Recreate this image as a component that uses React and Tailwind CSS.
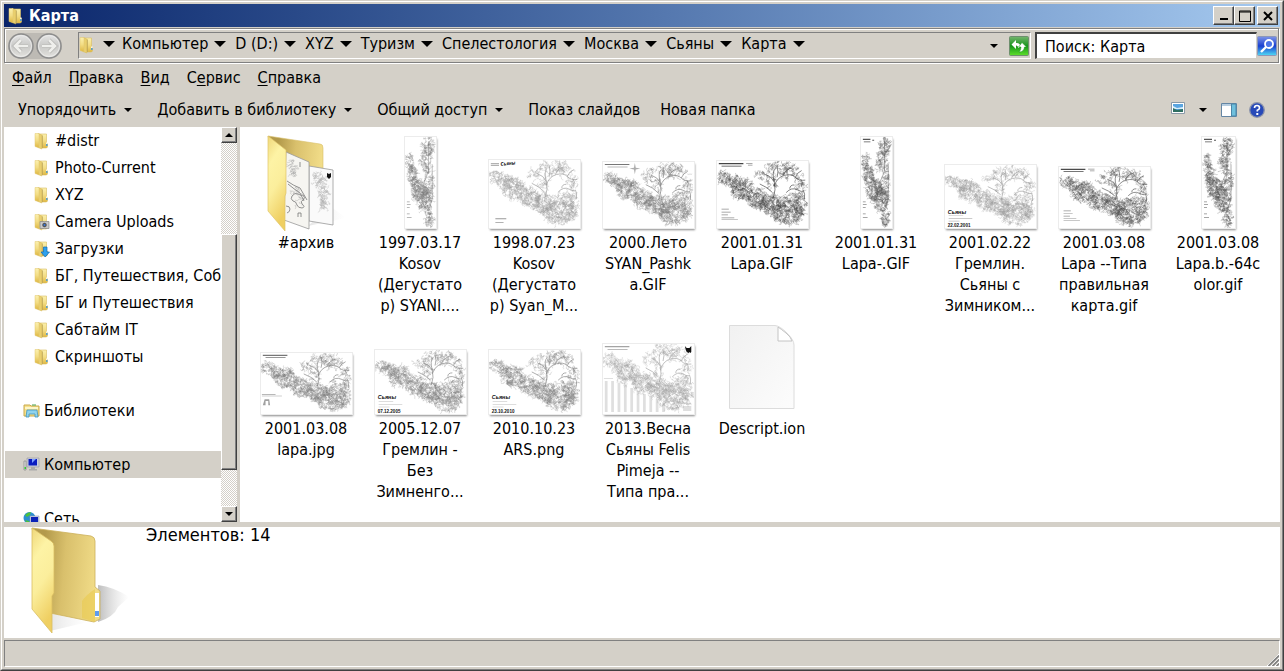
import { useState } from 'react';

const MENU = [
  ['', 'Ф', 'айл'],
  ['', 'П', 'равка'],
  ['', 'В', 'ид'],
  ['С', 'е', 'рвис'],
  ['', 'С', 'правка'],
];

const CRUMBS = ['Компьютер', 'D (D:)', 'XYZ', 'Туризм', 'Спелестология', 'Москва', 'Сьяны', 'Карта'];

const COMMANDS = [
  { label: 'Упорядочить', menu: true },
  { label: 'Добавить в библиотеку', menu: true },
  { label: 'Общий доступ', menu: true },
  { label: 'Показ слайдов' },
  { label: 'Новая папка' },
];

const TREE = [
  { label: '#distr', icon: 'folder' },
  { label: 'Photo-Current', icon: 'folder' },
  { label: 'XYZ', icon: 'folder' },
  { label: 'Camera Uploads', icon: 'camera' },
  { label: 'Загрузки', icon: 'download' },
  { label: 'БГ, Путешествия, Собаки', icon: 'folder' },
  { label: 'БГ и Путешествия', icon: 'folder' },
  { label: 'Сабтайм IT', icon: 'folder' },
  { label: 'Скриншоты', icon: 'folder' },
  null,
  { label: 'Библиотеки', icon: 'library', root: true },
  null,
  { label: 'Компьютер', icon: 'computer', root: true },
  null,
  { label: 'Сеть', icon: 'network', root: true },
];

const FILES = [
  { lines: ['#архив'], kind: 'folder' },
  { lines: ['1997.03.17', 'Kosov', '(Дегустато', 'р) SYANI....'], kind: 'tall', w: 31, h: 91, ink: '#777', seed: 3 },
  { lines: ['1998.07.23', 'Kosov', '(Дегустато', 'р) Syan_M...'], kind: 'wide', w: 91, h: 68, ink: '#999', seed: 5, corner: 'Сьяны' },
  { lines: ['2000.Лето', 'SYAN_Pashk', 'a.GIF'], kind: 'wide', w: 91, h: 66, ink: '#777', seed: 8, head: true, star: true },
  { lines: ['2001.01.31', 'Lapa.GIF'], kind: 'wide', w: 91, h: 67, ink: '#444', seed: 11, head: true, notes: true },
  { lines: ['2001.01.31', 'Lapa-.GIF'], kind: 'tall', w: 31, h: 91, ink: '#555', seed: 14, head: true },
  { lines: ['2001.02.22', 'Гремлин.', 'Сьяны с', 'Зимником...'], kind: 'wide', w: 91, h: 63, ink: '#999', seed: 17, date: '22.02.2001' },
  { lines: ['2001.03.08', 'Lapa --Типа', 'правильная', 'карта.gif'], kind: 'wide', w: 91, h: 61, ink: '#4a4a4a', seed: 20, head: true, notes: true },
  { lines: ['2001.03.08', 'Lapa.b.-64c', 'olor.gif'], kind: 'tall', w: 33, h: 91, ink: '#555', seed: 23, head: true },
  { lines: ['2001.03.08', 'lapa.jpg'], kind: 'wide', w: 91, h: 61, ink: '#777', seed: 26, head: true, legend: true },
  { lines: ['2005.12.07', 'Гремлин -', 'Без', 'Зимненго...'], kind: 'wide', w: 91, h: 64, ink: '#808080', seed: 29, date: '07.12.2005' },
  { lines: ['2010.10.23', 'ARS.png'], kind: 'wide', w: 91, h: 64, ink: '#808080', seed: 32, date: '23.10.2010' },
  { lines: ['2013.Весна', 'Сьяны Felis', 'Pimeja --', 'Типа пра...'], kind: 'wide', w: 91, h: 70, ink: '#a4a4a4', seed: 35, head: true, columns: true },
  { lines: ['Descript.ion'], kind: 'page' },
];

// cave galleries: [cx, cy, rx, ry, passages]
const WIDE = [
  [8, 17, 8, 6, 50],
  [17, 22, 8, 7, 60],
  [27, 29, 12, 11, 190],
  [44, 39, 11, 10, 150],
  [60, 45, 13, 10, 190],
  [78, 53, 17, 13, 300],
  [92, 48, 6, 12, 60],
  [70, 7, 18, 6, 70],
  [80, 12, 14, 6, 36],
  [92, 25, 6, 9, 30],
  [50, 15, 8, 5, 26],
  [60, 25, 6, 8, 26],
  [84, 37, 12, 4, 40],
];
const TALL = [
  [5, 27, 4, 9, 50],
  [8, 42, 5, 10, 110],
  [14, 58, 8, 12, 190],
  [21, 69, 8, 14, 210],
  [26, 89, 4, 10, 70],
  [25, 11, 6, 10, 90],
  [22, 28, 6, 12, 80],
  [26, 50, 5, 14, 70],
];

function drawCave(seed, areas, step) {
  let s = seed * 7919;
  const rnd = () => {
    s = (s * 16807) % 2147483647;
    return s / 2147483647;
  };
  let d = '';
  areas.forEach(([cx, cy, rx, ry, count]) => {
    for (let i = 0; i < count; i++) {
      const a = rnd() * Math.PI * 2;
      const r = Math.sqrt(rnd());
      let x = cx + Math.cos(a) * rx * r;
      let y = cy + Math.sin(a) * ry * r;
      let dir = rnd() * Math.PI * 2;
      d += `M${x.toFixed(1)} ${y.toFixed(1)}`;
      for (let k = 0; k < 5; k++) {
        dir += (rnd() - 0.5) * 4;
        x += Math.cos(dir) * step;
        y += Math.sin(dir) * step;
        d += `L${x.toFixed(1)} ${y.toFixed(1)}`;
      }
    }
  });
  return d;
}

function MapThumb({ file }) {
  const tall = file.kind === 'tall';
  const d = drawCave(file.seed, tall ? TALL : WIDE, tall ? 0.9 : 1.1);
  return (
    <svg
      width={file.w}
      height={file.h}
      viewBox={tall ? '0 0 33 100' : '0 0 100 70'}
      preserveAspectRatio="none"
      className="bg-white outline outline-[#ececec] shadow-[1px_2px_2px_#888]"
      aria-hidden="true"
    >
      <g fill="none" stroke={file.ink} strokeLinejoin="round">
        <path d={d} strokeWidth="0.28" />
        {!tall && (
          <path
            strokeWidth="0.7"
            d="M62 38Q65 30 63 22Q60 16 53 14M63 26Q66 17 74 15Q82 13 86 17T97 20M66 17Q68 12 66 5M73 15Q75 9 82 7M63 22Q60 12 64 8M86 17Q88 12 93 10M92 19Q95 22 93 27M76 33Q82 27 88 30T95 31Q97 34 96 40M61 33Q55 27 47 24M80 29Q80 25 85 25"
          />
        )}
        {tall && <path strokeWidth="0.5" d="M25 5V38L20 50M25 20L30 12M22 30L18 22M29 30V68L26 78" />}
      </g>
      <g fill={file.ink} stroke="none">
        {file.head && !tall && <path d="M2 2h27v1.3H2zM5 5h22v.7H5z" />}
        {file.head && tall && <path d="M2 2h8v1.3H2zM3 5h7v.7H3zM12 3h2v1h-2z" />}
        {file.notes && <path opacity=".6" d="M5 50h8v.7H5zM5 53h10v.7H5zM5 56h7v.7H5zM5 59h14v.7H5zM5 61h18v.7H5zM32 2h7v.8h-7zM34 4h5v.8h-5z" />}
        {file.star && <path opacity=".6" d="M35 1l1 5 5 1-5 1-1 5-1-5-5-1 5-1z" />}
        {file.legend && <path opacity=".7" d="M1 47h15v1H1zM1 49h22v.6H1zM2 60l2-7h5l1 7h-2V55H5v5z" />}
        {file.columns && (
          <path
            opacity=".35"
            d="M1 34h10v1H1zM2 37h3v31H2zM9 37h3v31H9zM16 39h3v29h-3zM23 41h3v27h-3zM30 44h3v24h-3zM37 47h3v21h-3zM44 50h3v18h-3zM51 52h3v16h-3zM58 55h3v13h-3zM65 59h3v9h-3zM86 59h11v1H86zM88 62h9v5h-9z"
          />
        )}
        {file.columns && <path fill="#111" d="M90 2l2 2h3l2-2v6l-1 1-1-1-1 1-2-1-1-2z" />}
        {tall && <path opacity=".7" d="M2 71h3v.8H2zM2 74h4v.8H2zM2 77h3v.8H2zM2 84h3v1H2zM2 88h5v.8H2z" />}
      </g>
      {file.corner && (
        <g fill="#222">
          <path fill="#999" d="M2 3h9v.8H2zM2 5h9v.8H2zM7 60h12v1H7zM7 64h9v.8H7z" />
          <text x="13" y="6" fontSize="5" fontStyle="italic" fontWeight="bold" transform="rotate(-5 13 6)">{file.corner}</text>
        </g>
      )}
      {file.date && (
        <g fill="#111" fontWeight="bold" fontFamily="Liberation Sans, sans-serif">
          <text x="3" y="54" fontSize="6" fontStyle="italic">Сьяны</text>
          <path fill="#bbb" d="M4 56h16v.7H4zM4 59h26v.7H4zM4 62h12v.7H4z" />
          <text x="3" y="69" fontSize="5">{file.date}</text>
        </g>
      )}
    </svg>
  );
}

function SharedGradients() {
  return (
    <svg width="0" height="0" className="absolute" aria-hidden="true">
      <defs>
        <linearGradient id="front" x1="0" y1="0" x2="0.3" y2="1">
          <stop offset="0" stopColor="#efd77a" />
          <stop offset="0.3" stopColor="#fdf3a5" />
          <stop offset="0.6" stopColor="#fbee9c" />
          <stop offset="1" stopColor="#efcf62" />
        </linearGradient>
        <linearGradient id="back" x1="0.2" y1="0" x2="1" y2="0.1">
          <stop offset="0" stopColor="#b39a4b" />
          <stop offset="0.4" stopColor="#d9c06c" />
          <stop offset="1" stopColor="#f1dc88" />
        </linearGradient>
        <linearGradient id="small" x1="0" y1="0" x2="0" y2="1">
          <stop offset="0" stopColor="#fbf0ae" />
          <stop offset="0.5" stopColor="#f3dd84" />
          <stop offset="1" stopColor="#dfb843" />
        </linearGradient>
        <linearGradient id="shade" x1="0" y1="0" x2="1" y2="0">
          <stop offset="0" stopColor="#888" stopOpacity="0.55" />
          <stop offset="1" stopColor="#bbb" stopOpacity="0" />
        </linearGradient>
        <linearGradient id="sheet" x1="0" y1="0" x2="1" y2="1">
          <stop offset="0" stopColor="#f1f1f1" />
          <stop offset="1" stopColor="#fcfcfc" />
        </linearGradient>
        <linearGradient id="orb" x1="0" y1="0" x2="0" y2="1">
          <stop offset="0" stopColor="#e6e6e6" />
          <stop offset="0.5" stopColor="#c9c9c7" />
          <stop offset="1" stopColor="#e4e3df" />
        </linearGradient>
        <linearGradient id="green" x1="0" y1="0" x2="0" y2="1">
          <stop offset="0" stopColor="#76b56f" />
          <stop offset="0.5" stopColor="#16941b" />
          <stop offset="1" stopColor="#5fe02a" />
        </linearGradient>
        <linearGradient id="blue" x1="0" y1="0" x2="0" y2="1">
          <stop offset="0" stopColor="#7d94e8" />
          <stop offset="0.5" stopColor="#1a3fd0" />
          <stop offset="1" stopColor="#4fdcf5" />
        </linearGradient>
      </defs>
    </svg>
  );
}

function ArchiveFolder() {
  return (
    <svg width="84" height="98" viewBox="0 0 84 98" className="-mb-1" aria-hidden="true">
      <path d="M44 92L82 84 66 72z" fill="url(#shade)" opacity=".4" />
      <path d="M4 2L56 10Q59 10 59 14V60L20 70z" fill="url(#back)" stroke="#d8bf6a" strokeWidth=".6" />
      <path d="M45 32L69 36V91L45 87z" fill="#fafafa" stroke="#999" strokeWidth=".8" />
      <path d={drawCave(41, [[55, 45, 6, 7, 40], [59, 62, 6, 14, 70]], 1.2)} fill="none" stroke="#aaa" strokeWidth=".35" />
      <path d="M63 39l2 1 2-1v4l-2 2-2-2z" fill="#111" />
      <path d="M22 18L45 28V95L20 86z" fill="#f6f5f1" stroke="#999" strokeWidth=".8" />
      <path
        d="M23 47Q30 52 36 54L43 66M24 50Q30 55 36 59L40 67M28 62q3-4 6-2t5 1q3 3 0 5-3 1-1 4 4 3 0 4-4 0-5-3-1-4-4-4-3-2-1-5M22 72q4 0 4 3t-3 4M34 83v-4h3v4M36 28v5"
        fill="none"
        stroke="#777"
        strokeWidth=".8"
      />
      <path d={drawCave(44, [[29, 34, 4, 8, 24], [33, 62, 7, 9, 14]], 1.3)} fill="none" stroke="#999" strokeWidth=".35" />
      <path d="M4 2L22 16V59L21 62V97L4 77z" fill="url(#front)" stroke="#dfc468" strokeWidth=".7" />
    </svg>
  );
}

function BigFolder() {
  return (
    <svg width="102" height="111" viewBox="0 0 102 111" className="shrink-0" aria-hidden="true">
      <path d="M70 95Q86 90 90 80L101 70Q86 60 70 58z" fill="url(#shade)" />
      <path d="M22 104L60 95 22 86z" fill="url(#shade)" opacity=".4" />
      <path d="M4 1L63 9Q67 10 67 14V60L72 64V92L66 95 22 86z" fill="url(#back)" stroke="#cbb05a" strokeWidth=".8" />
      <path d="M54 74Q58 68 67 62V95L54 91z" fill="#e9c94f" opacity=".6" />
      <path d="M67 66h4v24h-4z" fill="#fff" />
      <path d="M67 84h4v5h-4z" fill="#5e9cf0" />
      <path d="M4 1L23 14Q26 16 26 19V66L24 69V106L4 82z" fill="url(#front)" stroke="#d9be62" strokeWidth=".8" />
    </svg>
  );
}

function PageIcon() {
  return (
    <svg width="70" height="92" viewBox="0 0 70 92" aria-hidden="true">
      <path d="M3 4h47l17 18v65H3z" fill="#bbb" opacity=".35" />
      <path d="M2.500 3.500H48Q53 4 60 11T67 23V86.500H2.500z" fill="url(#sheet)" stroke="#dcdcdc" />
      <path d="M51 5V19H65Q64 15 59 11T51 5z" fill="#fff" stroke="#c4c4c4" />
    </svg>
  );
}

function TreeIcon({ name }) {
  if (name === 'library') {
    return (
      <svg width="17" height="16" viewBox="0 0 17 16" aria-hidden="true">
        <path d="M1 2h6l1 1h8v10H1z" fill="#f6e08a" stroke="#c8a84a" />
        <path d="M2 4h13v2H2z" fill="#fdf6c9" />
        <path d="M4 7h10l1 7h-3v-3H6v3H3z" fill="#8fd3ee" stroke="#3f95bf" strokeWidth=".8" />
        <path d="M9 2h4" stroke="#4aa34a" />
      </svg>
    );
  }
  if (name === 'computer') {
    return (
      <svg width="17" height="16" viewBox="0 0 17 16" aria-hidden="true">
        <path d="M1 4h2v9H1z" fill="#ddd" stroke="#888" strokeWidth=".7" />
        <path d="M1.500 10h1.500v2h-1.500z" fill="#3c3" />
        <path d="M4 1h12v9H4z" fill="#c9cede" stroke="#999" strokeWidth=".6" />
        <path d="M5.500 2H14v6.500H5.500z" fill="#0a1cc0" />
        <path d="M9 2h4l-4 4z" fill="#7fa0ff" />
        <path d="M8 10h4v2h2v1.500H6V12h2z" fill="#aaa" />
      </svg>
    );
  }
  if (name === 'network') {
    return (
      <svg width="17" height="16" viewBox="0 0 17 16" aria-hidden="true">
        <circle cx="6.500" cy="7" r="6" fill="#2c8fd0" />
        <path d="M2 4q3-3 6-3l-1 3-3 2zM2 9l4 1 1 3q-4-1-5-4z" fill="#4cc13c" />
        <path d="M7 5h9v8H7z" fill="#cfd6e8" stroke="#8a93ad" strokeWidth=".6" />
        <path d="M8 6h7v6H8z" fill="#0b22b8" />
        <path d="M9 14h5v1H9z" fill="#999" />
      </svg>
    );
  }
  return (
    <svg width="17" height="18" viewBox="0 0 17 18" aria-hidden="true">
      <path d="M4 2h8.500v8.500l1 1V15l-1 1H8z" fill="url(#small)" stroke="#d9bd62" strokeWidth=".6" />
      <path d="M8.300 3.500V16" stroke="#b7a05a" strokeWidth=".9" />
      <path d="M4 1.500L7.800 3v14L4 15.500z" fill="#e9cf6e" stroke="#d5b654" strokeWidth=".5" />
      <path d="M1 1.500h4V15l-1 .5-3-1z" fill="url(#small)" stroke="#e0c670" strokeWidth=".5" />
      {name === 'folder' && <path d="M12.200 10.500h1.300v1.500h-1.300z" fill="#fff" />}
      {name === 'folder' && <path d="M12.200 12h1.300v2h-1.300z" fill="#3c94e0" />}
      {name === 'camera' && (
        <g>
          <path d="M6 8.500h9v7H6z" fill="#c8c8c8" stroke="#888" strokeWidth=".7" />
          <circle cx="10.500" cy="12" r="2.700" fill="#555" stroke="#eee" strokeWidth=".6" />
          <circle cx="10.500" cy="12" r="1" fill="#3a7be0" />
        </g>
      )}
      {name === 'download' && <path d="M9.500 7h3.500v5h2.500l-4.300 5L7 12h2.500z" fill="#2ea1ee" stroke="#0f6cb5" strokeWidth=".7" />}
    </svg>
  );
}

function Arrow({ small }) {
  return small ? (
    <svg width="8" height="4" viewBox="0 0 8 4" aria-hidden="true"><path d="M0 0h8L4 4z" /></svg>
  ) : (
    <svg width="12" height="6" viewBox="0 0 12 6" aria-hidden="true"><path d="M0 0h12L6 6z" /></svg>
  );
}

const raised = 'bg-[#d4d0c8] border border-t-white border-l-white border-r-[#404040] border-b-[#404040] shadow-[inset_-1px_-1px_#808080]';

function TitleBar() {
  return (
    <header className="flex h-[23px] shrink-0 items-center bg-linear-to-r from-[#0a246a] to-[#a6caf0] pl-1 pr-[2px]">
      <TreeIcon name="folder" />
      <h1 className="ml-1 flex-1 font-bold leading-5 text-white">Карта</h1>
      <button aria-label="Свернуть" className={`flex h-[19px] w-[21px] items-center justify-center ${raised}`}>
        <svg width="12" height="11" viewBox="0 0 12 11"><path d="M2 8h8v2H2z" /></svg>
      </button>
      <button aria-label="Развернуть" className={`flex h-[19px] w-[21px] items-center justify-center ${raised}`}>
        <svg width="12" height="12" viewBox="0 0 12 12"><path d="M.500 1h11v10.500H.500zM.500 2h11" fill="none" stroke="#000" /></svg>
      </button>
      <button aria-label="Закрыть" className={`ml-[2px] flex h-[19px] w-[21px] items-center justify-center ${raised}`}>
        <svg width="10" height="10" viewBox="0 0 10 10"><path d="M1 1l8 8M9 1L1 9" stroke="#000" strokeWidth="2" /></svg>
      </button>
    </header>
  );
}

function NavOrb({ label, back }) {
  const arrow = back ? 'M20 13H8M13 7l-6 6 6 6' : 'M6 13h12M13 7l6 6-6 6';
  return (
    <button aria-label={label}>
      <svg width="26" height="26" viewBox="0 0 26 26">
        <circle cx="13" cy="13" r="12" fill="url(#orb)" stroke="#8d8d8d" strokeWidth="1.500" />
        <circle cx="13" cy="13" r="10.500" fill="none" stroke="#eee" strokeWidth=".8" />
        <path d={arrow} fill="none" stroke="#b4b4b2" strokeWidth="4" />
        <path d={arrow} fill="none" stroke="#efefec" strokeWidth="2.600" />
      </svg>
    </button>
  );
}

function AddressBar() {
  const [query, setQuery] = useState('');
  return (
    <div className="mt-px mr-px flex h-[35px] shrink-0 items-center border border-[#808080] pl-[3px] shadow-[1px_1px_#fff,inset_1px_1px_#fff]">
      <nav className="flex gap-[2px] rounded-full bg-[#bdbab4]">
        <NavOrb label="Назад" back />
        <NavOrb label="Вперед" />
      </nav>
      <div className="ml-4 flex h-[27px] min-w-0 flex-1 items-center border border-t-[#808080] border-l-[#808080] border-r-white border-b-white pr-px">
        <span className="mb-[2px]"><TreeIcon name="folder" /></span>
        <button aria-label="Расположения" className="mx-[7px] pb-1"><Arrow /></button>
        {CRUMBS.map((crumb) => (
          <button key={crumb} className="mr-[9px] flex items-center gap-[6px] whitespace-nowrap pb-1 leading-5">
            {crumb}
            <Arrow />
          </button>
        ))}
        <button aria-label="Предыдущие расположения" className="ml-auto mr-[11px]"><Arrow small /></button>
        <button aria-label="Обновить">
          <svg width="20" height="20" viewBox="0 0 20 20">
            <rect x=".500" y=".500" width="19" height="19" rx="1" fill="url(#green)" stroke="#6e8f6e" />
            <path d="M2.500 8.500L7 4v3q4-.5 4.500 3.500L9.500 12Q9 9.500 7 9.500V13z" fill="#fff" />
            <path d="M17.500 11L13 6.500 9.500 11h2.500q0 3-2 5 5 0 5.500-5z" fill="#fff" stroke="#16941b" strokeWidth=".5" />
          </svg>
        </button>
      </div>
      <input
        aria-label="Поиск"
        className="ml-1 h-[27px] w-[222px] border-t-2 border-l-2 border-r border-b border-t-[#404040] border-l-[#404040] border-r-[#d4d0c8] border-b-[#d4d0c8] bg-white pl-2 leading-5 outline-none placeholder:text-black"
        placeholder="Поиск: Карта"
        value={query}
        onChange={(e) => setQuery(e.target.value)}
      />
      <button aria-label="Найти" className="mr-px">
        <svg width="20" height="20" viewBox="0 0 20 20">
          <rect x=".500" y=".500" width="19" height="19" rx="1" fill="url(#blue)" stroke="#8c97b8" />
          <circle cx="12" cy="8" r="4" fill="#4c74e8" stroke="#fff" strokeWidth="1.800" />
          <path d="M9 11l-5 5" stroke="#fff" strokeWidth="2.400" />
        </svg>
      </button>
    </div>
  );
}

function CommandBar() {
  return (
    <div className="flex h-[35px] shrink-0 items-center pl-[14px] pr-[15px]">
      {COMMANDS.map((c) => (
        <button key={c.label} className={`flex items-center gap-2 whitespace-nowrap ${c.menu ? 'mr-[25px]' : 'mr-5'}`}>
          {c.label}
          {c.menu && <Arrow small />}
        </button>
      ))}
      <button aria-label="Вид" className="ml-auto mb-1">
        <svg width="14" height="12" viewBox="0 0 14 12">
          <path d="M.500.500h13v11H.500z" fill="#fff" stroke="#8a9aa8" />
          <path d="M2 2h10v8H2z" fill="#5aa5e0" />
          <path d="M2 4l4 2 6-1v2H2z" fill="#d9eefa" />
          <path d="M2 6l4 2 6-1v3H2z" fill="#2f6f62" />
        </svg>
      </button>
      <button aria-label="Другие параметры" className="ml-[14px]"><Arrow small /></button>
      <button aria-label="Область просмотра" className="ml-[14px]">
        <svg width="16" height="14" viewBox="0 0 16 14">
          <path d="M.500.500h15v13H.500z" fill="#fff" stroke="#6486a4" />
          <path d="M1 1h14v2H1z" fill="#b6cde0" />
          <path d="M10.500 1h4.500v12h-4.500z" fill="#6fc0dd" stroke="#4a86a8" />
        </svg>
      </button>
      <button aria-label="Справка" className="ml-3">
        <svg width="16" height="16" viewBox="0 0 16 16">
          <circle cx="8" cy="8" r="7.300" fill="#2749b8" stroke="#8c94aa" strokeWidth="1.300" />
          <path d="M5.500 6q0-2.500 2.500-2.500T10.500 6Q10.500 7.500 8.300 8.300V9.500" fill="none" stroke="#fff" strokeWidth="1.600" />
          <path d="M7.300 11h2v2h-2z" fill="#fff" />
        </svg>
      </button>
    </div>
  );
}

function ScrollBar() {
  return (
    <div className="flex w-4 shrink-0 flex-col bg-[repeating-conic-gradient(#fff_0%_25%,#d4d0c8_0%_50%)] bg-size-[2px_2px]">
      <button aria-label="Вверх" className={`flex h-4 shrink-0 items-center justify-center ${raised}`}>
        <svg width="8" height="4" viewBox="0 0 8 4"><path d="M0 4h8L4 0z" /></svg>
      </button>
      <div className="grow-[91]" />
      <div className={`grow-[236] ${raised}`} />
      <div className="grow-[36]" />
      <button aria-label="Вниз" className={`flex h-4 shrink-0 items-center justify-center ${raised}`}>
        <Arrow small />
      </button>
    </div>
  );
}

function Sidebar() {
  const [selected, setSelected] = useState(12);
  return (
    <aside className="flex w-[233px] shrink-0 bg-white">
      <ul className="min-w-0 flex-1 overflow-hidden pl-px">
        {TREE.map((node, i) => (
          <li key={i} className="h-[27px]">
            {node && (
              <button
                onClick={() => setSelected(i)}
                className={`flex h-full w-full items-center gap-1 whitespace-nowrap ${node.root ? 'pl-[18px]' : 'pl-[29px]'} ${
                  i === selected ? 'bg-[#d4d0c8]' : ''
                }`}
              >
                <span className="shrink-0"><TreeIcon name={node.icon} /></span>
                {node.label}
              </button>
            )}
          </li>
        ))}
      </ul>
      <ScrollBar />
    </aside>
  );
}

function FileItem({ file }) {
  return (
    <li className="flex flex-col items-center">
      <div className="flex h-[97px] items-end pb-1">
        {file.kind === 'folder' && <ArchiveFolder />}
        {file.kind === 'page' && <PageIcon />}
        {file.w && <MapThumb file={file} />}
      </div>
      <p className="h-[84px] whitespace-nowrap text-center leading-[21px]">
        {file.lines.map((line) => (
          <span key={line} className="block">{line}</span>
        ))}
      </p>
    </li>
  );
}

export default function App() {
  return (
    <div className="flex h-screen flex-col overflow-hidden border border-t-[#d4d0c8] border-l-[#d4d0c8] border-r-[#404040] border-b-[#404040] bg-[#d4d0c8] font-['DejaVu_Sans_Condensed','DejaVu_Sans',sans-serif] text-base text-black">
      <SharedGradients />
      <div className="flex min-h-0 flex-1 flex-col border border-t-white border-l-white border-r-[#808080] border-b-[#808080] p-[2px]">
        <TitleBar />
        <AddressBar />
        <nav className="mt-px flex h-7 shrink-0 items-center gap-[17px] pl-2">
          {MENU.map(([before, key, after]) => (
            <button key={key + after}>
              {before}
              <span className="underline underline-offset-2">{key}</span>
              {after}
            </button>
          ))}
        </nav>
        <CommandBar />
        <main className="flex min-h-0 flex-1">
          <Sidebar />
          <ul className="ml-[3px] grid min-w-0 flex-1 grid-cols-[repeat(auto-fill,114px)] content-start gap-y-[5px] overflow-hidden bg-white pl-[9px] pt-2">
            {FILES.map((file) => (
              <FileItem key={file.lines.join('')} file={file} />
            ))}
          </ul>
        </main>
        <section className="mt-[5px] flex h-[111px] shrink-0 bg-white pl-6">
          <BigFolder />
          <p className="ml-4 text-lg leading-4">Элементов: 14</p>
        </section>
        <footer className="mt-[2px] flex h-[27px] shrink-0 items-end justify-end border border-t-[#808080] border-l-[#808080] border-r-white border-b-white">
          <svg width="12" height="12" viewBox="0 0 12 12" aria-hidden="true">
            <path d="M0 12L12 0M4 12l8-8M8 12l4-4" stroke="#fff" />
            <path d="M1.500 12L12 1.500M5.500 12L12 5.500M9.500 12L12 9.500" stroke="#808080" strokeWidth="1.600" />
          </svg>
        </footer>
      </div>
    </div>
  );
}
